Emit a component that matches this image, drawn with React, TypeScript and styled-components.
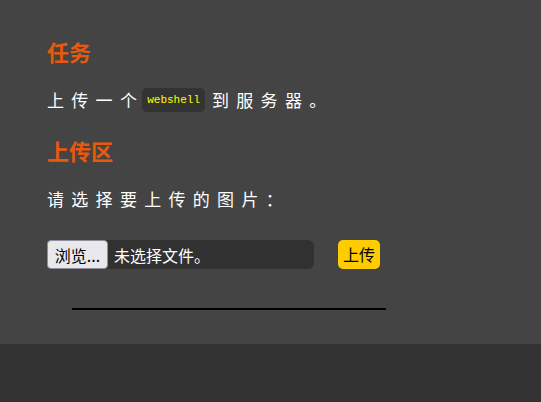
import React from "react";
import styled, { createGlobalStyle } from "styled-components";

const Global = createGlobalStyle`
  html, body { margin: 0; padding: 0; background: #333333; }
  body { font-family: "Noto Sans CJK SC", "Noto Sans", sans-serif; }
`;

const Panel = styled.main`
  background: #444444;
  padding: 36px 47px 34px;
  display: flex;
  flex-direction: column;
  align-items: flex-start;
`;

const Heading = styled.h2<{ $gap?: number }>`
  margin: ${(p) => p.$gap ?? 0}px 0 0;
  font-size: 22px;
  line-height: 30px;
  font-weight: 700;
  color: #e8590c;
`;

const Para = styled.p`
  margin: 19px 0 0;
  font-size: 17px;
  line-height: 30px;
  letter-spacing: 7.3px;
  color: #ffffff;
  display: flex;
  align-items: center;
`;

const Code = styled.code`
  font-family: "Liberation Mono", "DejaVu Sans Mono", monospace;
  font-size: 11px;
  font-weight: 400;
  letter-spacing: 0;
  color: #ffff00;
  background: #333333;
  border-radius: 5px;
  padding: 0 5px;
  line-height: 24px;
  margin: 0 7px 0 -2px;
  display: inline-block;
`;

const UploadRow = styled.form`
  margin-top: 26px;
  display: flex;
  align-items: center;
  gap: 24px;
`;

const FileBox = styled.label`
  display: flex;
  align-items: center;
  width: 267px;
  height: 29px;
  background: #313131;
  border-radius: 6px;
  cursor: pointer;
`;

const BrowseButton = styled.span`
  box-sizing: border-box;
  height: 29px;
  width: 61px;
  display: flex;
  align-items: center;
  justify-content: center;
  background: #e9e9ed;
  border: 1px solid #8f8f9d;
  border-radius: 4px;
  color: #000;
  font-size: 16px;
  white-space: nowrap;
`;

const FileName = styled.span`
  margin-left: 6px;
  color: #ffffff;
  font-size: 16px;
  white-space: nowrap;
`;

const SubmitButton = styled.button`
  height: 29px;
  padding: 0 5px;
  border: none;
  border-radius: 5px;
  background: #ffcc00;
  color: #000;
  font-family: "Noto Sans CJK SC", sans-serif;
  font-size: 16px;
  line-height: 29px;
  cursor: pointer;
`;

const Divider = styled.div`
  margin: 39px 0 0 25px;
  width: 314px;
  height: 2px;
  background: #000;
`;

export default function App() {
  return (
    <>
      <Global />
      <Panel>
        <Heading>任务</Heading>
        <Para>
          上传一个<Code>webshell</Code>到服务器。
        </Para>
        <Heading $gap={20}>上传区</Heading>
        <Para>请选择要上传的图片：</Para>
        <UploadRow onSubmit={(e) => e.preventDefault()}>
          <FileBox>
            <BrowseButton>浏览...</BrowseButton>
            <FileName>未选择文件。</FileName>
          </FileBox>
          <SubmitButton type="submit">上传</SubmitButton>
        </UploadRow>
        <Divider />
      </Panel>
    </>
  );
}
